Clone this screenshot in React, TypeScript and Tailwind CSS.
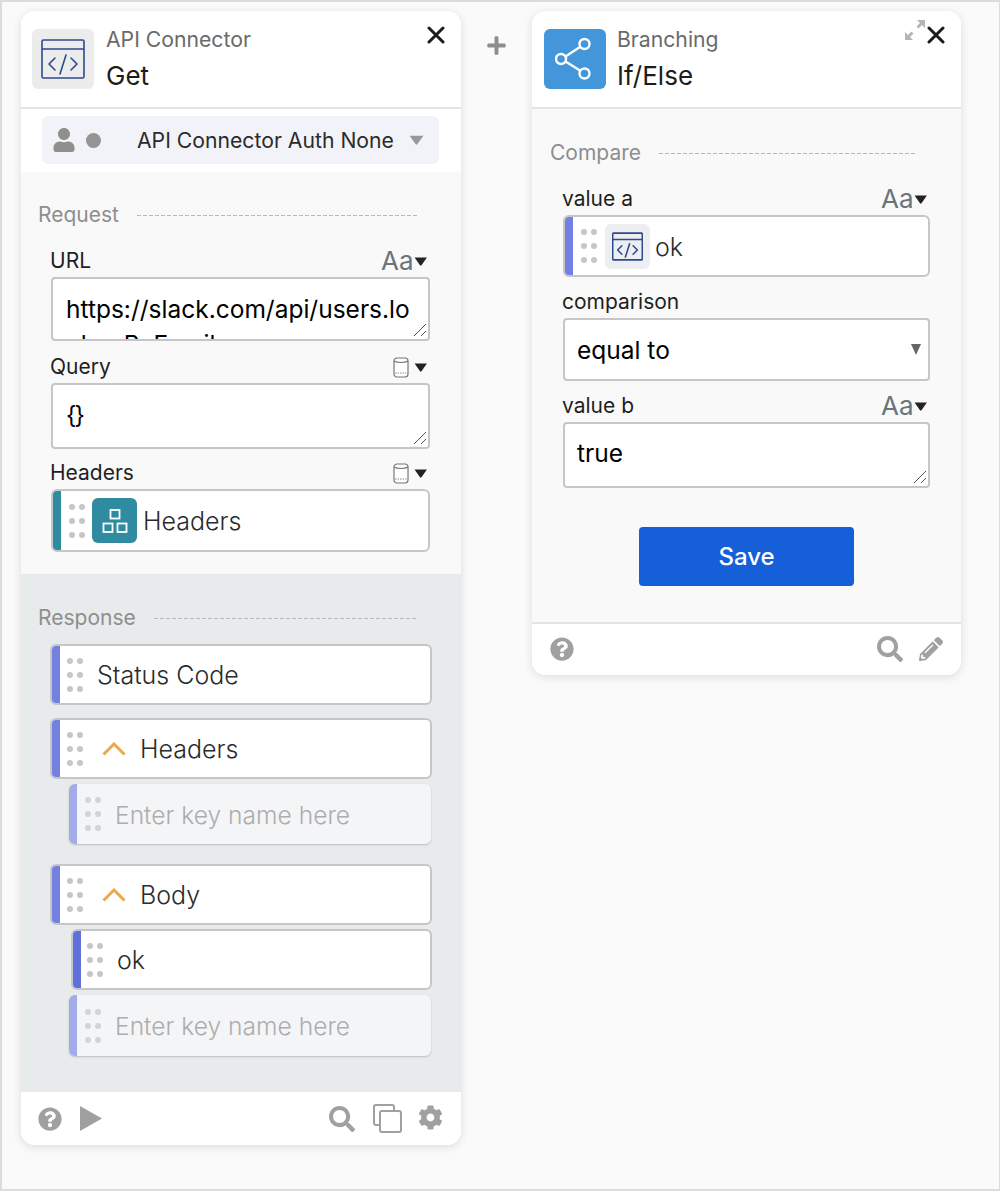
import { ReactNode } from "react";
import { FaUser, FaSearch, FaCog, FaPencilAlt, FaPlus, FaQuestionCircle } from "react-icons/fa";

const CodeIcon = ({ size, stroke = 1.6 }: { size: number; stroke?: number }) => (
  <svg width={size} height={size} viewBox="0 0 44 40" fill="none" stroke="#2c4a8c" strokeWidth={stroke}>
    <rect x="1" y="1" width="42" height="38" rx="1.5" />
    <path d="M1 10h42" />
    <path d="M14 19l-6 6 6 6M30 19l6 6-6 6M25 16l-6 19" strokeLinecap="round" strokeLinejoin="round" />
  </svg>
);

const ShareIcon = () => (
  <svg width="40" height="44" viewBox="0 0 40 44" fill="none" stroke="#fff" strokeWidth="2.4">
    <circle cx="6" cy="22" r="5" />
    <circle cx="29.5" cy="7" r="5" />
    <circle cx="29.5" cy="36.5" r="5" />
    <path d="M10.5 19.5L25 10M10.5 24.5L25 33.5" />
  </svg>
);

const BlocksIcon = () => (
  <svg width="26" height="26" viewBox="0 0 26 26" fill="none" stroke="#fff" strokeWidth="1.8">
    <rect x="8.5" y="2" width="9" height="8.5" />
    <rect x="1.5" y="15.5" width="9" height="8.5" />
    <rect x="15.5" y="15.5" width="9" height="8.5" />
  </svg>
);

const CloseIcon = () => (
  <svg width="18" height="18" viewBox="0 0 18 18" stroke="#1a1a1a" strokeWidth="3" strokeLinecap="round">
    <path d="M2 2l14 14M16 2L2 16" />
  </svg>
);

const Caret = ({ w = 9, color = "#222" }: { w?: number; color?: string }) => (
  <svg width={w * 1.5} height={w} viewBox="0 0 12 8" fill={color}>
    <path d="M0.5 0.5h11L6.8 7.2a1 1 0 0 1-1.6 0z" />
  </svg>
);

const Dots = ({ color = "#c6c6c6" }: { color?: string }) => (
  <svg width="17" height="34" viewBox="0 0 17 34" fill={color} className="shrink-0">
    {[3, 17, 31].map((y) => (
      <g key={y}>
        <circle cx="3" cy={y} r="3" />
        <circle cx="13" cy={y} r="3" />
      </g>
    ))}
  </svg>
);

const DbIcon = () => (
  <svg width="16" height="21" viewBox="0 0 16 21" fill="#fff" stroke="#777" strokeWidth="1.2">
    <rect x="1" y="1" width="14" height="19" rx="3" />
    <path d="M1 4c3 2 11 2 14 0" fill="none" />
    <path d="M2 16h12" strokeDasharray="1.5 1" fill="none" strokeWidth="0.8" />
  </svg>
);

const Grip = () => (
  <svg width="14" height="14" viewBox="0 0 14 14" stroke="#555" strokeWidth="1" className="absolute right-[1px] bottom-[2px]">
    <path d="M1 13L13 1M8 13l5-5" />
  </svg>
);

const AaPicker = () => (
  <span className="mr-[3px] flex items-center text-[26px] leading-none text-[#69757b]">
    Aa
    <span className="mt-[1px]">
      <Caret w={9} />
    </span>
  </span>
);

const DbPicker = () => (
  <span className="mr-[3px] flex items-center gap-[5px]">
    <DbIcon />
    <Caret w={9} />
  </span>
);

const FieldLabel = ({ label, right }: { label: string; right: ReactNode }) => (
  <div className="flex h-[30px] items-center justify-between pb-[2px] text-[21px] text-[#1f1f1f]">
    <span className="ml-[-1px]">{label}</span>
    {right}
  </div>
);

const TextBox = ({ children, height, top = "pt-[13px]" }: { children: ReactNode; height: string; top?: string }) => (
  <div className={`relative overflow-hidden rounded-[4px] border-2 border-[#c6c6c6] bg-white ${height}`}>
    <div className={`break-all px-[13px] text-[24.5px] leading-[35px] text-black ${top}`}>{children}</div>
    <Grip />
  </div>
);

const Row = ({
  accent = "#7480e0",
  faded,
  className,
  children,
}: {
  accent?: string;
  faded?: boolean;
  className: string;
  children: ReactNode;
}) => (
  <div
    className={`flex items-center overflow-hidden rounded-[6px] ${
      faded
        ? "bg-[#f4f5f7] shadow-[0_1px_2px_rgba(0,0,0,0.2)]"
        : "border-2 border-[#c6c6c6] bg-white"
    } ${className}`}
  >
    <div className="h-full w-[8px] shrink-0" style={{ backgroundColor: accent }} />
    {children}
  </div>
);

const RowText = ({ children, className }: { children: string; className: string }) => (
  <span className={`pt-[3px] text-[25px] font-light text-[#2b2b2b] ${className}`}>{children}</span>
);

const Placeholder = () => (
  <span className="ml-[13px] pt-[2px] text-[24.6px] font-light text-[#adadad]">Enter key name here</span>
);

const Chevron = () => (
  <svg width="24" height="14" viewBox="0 0 24 14" fill="none" stroke="#eaa94a" strokeWidth="3" className="shrink-0">
    <path d="M1.5 12.5L12 2l10.5 10.5" />
  </svg>
);

const SectionTitle = ({ title, lineClass, gapClass }: { title: string; lineClass: string; gapClass: string }) => (
  <div className={`flex h-[30px] items-center ${lineClass}`}>
    <span className="text-[21px] text-[#8e8e8e]">{title}</span>
    <div className={`h-px flex-1 bg-[repeating-linear-gradient(90deg,#b8b8b8_0_4px,transparent_4px_6px)] ${gapClass}`} />
  </div>
);

const CardHeader = ({ icon, small, big, iconBg, extra }: { icon: ReactNode; small: string; big: string; iconBg: string; extra?: ReactNode }) => (
  <div className="relative flex h-[98px] shrink-0 border-b-2 border-[#e4e4e4] bg-white pl-[11px] pt-[18px]">
    <div className={`flex h-[60px] w-[62px] items-center justify-center rounded-[6px] ${iconBg}`}>{icon}</div>
    <div className="ml-[12px]">
      <div className="mt-[-4px] text-[21.2px] leading-[28px] text-[#6a6a6a]">{small}</div>
      <div className="mt-[5px] text-[26px] leading-[36px] text-[#1c1c1c]">{big}</div>
    </div>
    {extra}
    <div className="absolute right-[16px] top-[15px]">
      <CloseIcon />
    </div>
  </div>
);

const CopyIcon = () => (
  <svg width="29" height="29" viewBox="0 0 29 29" fill="none" stroke="#a0a0a0" strokeWidth="2">
    <path d="M7 21H3a2 2 0 0 1-2-2V3a2 2 0 0 1 2-2h16a2 2 0 0 1 2 2v4" />
    <rect x="7" y="7" width="21" height="21" rx="2" />
  </svg>
);

const ExpandIcon = () => (
  <svg width="22" height="22" viewBox="0 0 22 22" fill="#b5b5b5">
    <path d="M13 1h8v8l-3-3-3.5 3.5-2-2L16 4z" />
    <path d="M9 21H1v-8l3 3 3.5-3.5 2 2L6 18z" />
  </svg>
);

const PlayIcon = () => (
  <svg width="22" height="25" viewBox="0 0 22 25" fill="#a0a0a0">
    <path d="M0 0l22 12.5L0 25z" />
  </svg>
);

export default function App() {
  return (
    <div
      className="flex h-[1191px] w-[1000px] items-start border-2 border-r border-[#dcdcdc] bg-[#fafafa] pl-[19px] pt-[9px]"
      style={{ fontFamily: "Inter, 'Noto Sans', sans-serif" }}
    >
      {/* API connector */}
      <div className="flex w-[440px] shrink-0 flex-col overflow-hidden rounded-[14px] bg-white shadow-[0_2px_10px_rgba(0,0,0,0.12)]">
        <CardHeader icon={<CodeIcon size={44} />} small="API Connector" big="Get" iconBg="bg-[#ececec]" />

        <div className="h-[63px] bg-white pl-[21px] pr-[22px] pt-[7px]">
          <div className="flex h-[48px] items-center rounded-[6px] bg-[#f2f3f8] pl-[10px] pr-[15px]">
            <FaUser size={24} className="text-[#8f8f8f]" />
            <div className="ml-[10px] h-[15px] w-[15px] rounded-full bg-[#949494]" />
            <span className="ml-[36px] flex-1 pt-[1px] text-[21.2px] text-[#2b2b2b]">API Connector Auth None</span>
            <Caret w={10} color="#989898" />
          </div>
        </div>

        <div className="h-[402px] bg-[#f9f9f9] pl-[17px] pt-[28px]">
          <SectionTitle title="Request" lineClass="w-[379px]" gapClass="ml-[18px]" />
          <div className="ml-[13px] w-[379px]">
            <div className="mt-[17px]">
              <FieldLabel label="URL" right={<AaPicker />} />
              <TextBox height="h-[64px]">https://slack.com/api/users.lookupByEmail</TextBox>
            </div>
            <div className="mt-[12px]">
              <FieldLabel label="Query" right={<DbPicker />} />
              <TextBox height="h-[66px]">
                <span className="tracking-[-0.08em]">{"{}"}</span>
              </TextBox>
            </div>
            <div className="mt-[10px]">
              <FieldLabel label="Headers" right={<DbPicker />} />
              <Row accent="#2f8b9f" className="h-[63px]">
                <div className="ml-[8px]">
                  <Dots />
                </div>
                <div className="ml-[6px] flex h-[45px] w-[45px] items-center justify-center rounded-[6px] bg-[#2f8b9f]">
                  <BlocksIcon />
                </div>
                <RowText className="ml-[6px]">Headers</RowText>
              </Row>
            </div>
          </div>
        </div>

        <div className="h-[518px] bg-[#e8ebec] pl-[17px] pt-[29px]">
          <SectionTitle title="Response" lineClass="w-[379px]" gapClass="ml-[18px]" />
          <div className="mt-[11px] flex w-[394px] flex-col pl-[12px]">
            <Row className="h-[61px]">
              <div className="ml-[7px]">
                <Dots />
              </div>
              <RowText className="ml-[13px]">Status Code</RowText>
            </Row>
            <Row className="mt-[13px] h-[61px]">
              <div className="ml-[7px]">
                <Dots />
              </div>
              <div className="ml-[18px]">
                <Chevron />
              </div>
              <RowText className="ml-[14px]">Headers</RowText>
            </Row>
            <Row accent="#a3ace9" faded className="ml-[19px] mt-[5px] h-[60px] w-[362px]">
              <div className="ml-[8px]">
                <Dots color="#d4d4d4" />
              </div>
              <Placeholder />
            </Row>
            <Row className="mt-[20px] h-[61px]">
              <div className="ml-[7px]">
                <Dots />
              </div>
              <div className="ml-[18px]">
                <Chevron />
              </div>
              <RowText className="ml-[14px]">Body</RowText>
            </Row>
            <Row accent="#5f70dc" className="ml-[21px] mt-[4px] h-[61px] w-[361px]">
              <div className="ml-[6px]">
                <Dots />
              </div>
              <RowText className="ml-[13px]">ok</RowText>
            </Row>
            <Row accent="#a3ace9" faded className="ml-[19px] mt-[5px] h-[61px] w-[362px]">
              <div className="ml-[8px]">
                <Dots color="#d4d4d4" />
              </div>
              <Placeholder />
            </Row>
          </div>
        </div>

        <div className="flex h-[53px] items-center bg-white pl-[17px] pr-[18px]">
          <FaQuestionCircle size={24} className="text-[#a0a0a0]" />
          <div className="ml-[18px]">
            <PlayIcon />
          </div>
          <FaSearch size={26} className="ml-auto text-[#a0a0a0]" />
          <div className="ml-[18px]">
            <CopyIcon />
          </div>
          <FaCog size={25} className="ml-[16px] mb-[2px] text-[#a0a0a0]" />
        </div>
      </div>

      {/* plus */}
      <div className="flex h-[68px] w-[71px] shrink-0 items-center justify-center">
        <FaPlus size={21} className="text-[#8e8e8e]" />
      </div>

      {/* If/Else */}
      <div className="flex w-[429px] shrink-0 flex-col overflow-hidden rounded-[14px] bg-white shadow-[0_2px_10px_rgba(0,0,0,0.12)]">
        <CardHeader
          icon={<ShareIcon />}
          small="Branching"
          big="If/Else"
          iconBg="ml-[1px] mr-[-1px] bg-[#4296d9]"
          extra={
            <div className="absolute right-[35px] top-[8px]">
              <ExpandIcon />
            </div>
          }
        />

        <div className="h-[515px] border-b-2 border-[#e4e4e4] bg-[#f9f9f9] pl-[18px] pt-[29px]">
          <SectionTitle title="Compare" lineClass="w-[366px]" gapClass="ml-[18px]" />
          <div className="ml-[13px] w-[367px]">
            <div className="mt-[17px]">
              <FieldLabel label="value a" right={<AaPicker />} />
              <Row className="h-[62px]">
                <div className="ml-[8px]">
                  <Dots />
                </div>
                <div className="ml-[7px] flex h-[45px] w-[45px] items-center justify-center rounded-[6px] bg-[#eceef1]">
                  <CodeIcon size={31} stroke={2.2} />
                </div>
                <RowText className="ml-[5px]">ok</RowText>
              </Row>
            </div>
            <div className="mt-[11px]">
              <FieldLabel label="comparison" right={null} />
              <div className="flex h-[63px] items-center justify-between rounded-[4px] border-2 border-[#c6c6c6] bg-white pl-[12px] pr-[7px]">
                <span className="pt-[2px] text-[24.5px] text-black">equal to</span>
                <svg width="10" height="11" viewBox="0 0 10 11" fill="#666">
                  <path d="M0 0h10L5 11z" />
                </svg>
              </div>
            </div>
            <div className="mt-[11px]">
              <FieldLabel label="value b" right={<AaPicker />} />
              <TextBox height="h-[66px]" top="ml-[-1px] pt-[12px]">
                true
              </TextBox>
            </div>
          </div>
          <button className="ml-[89px] mt-[39px] h-[59px] w-[215px] rounded-[4px] bg-[#1560d8] text-[24px] font-medium text-white">
            Save
          </button>
        </div>

        <div className="flex h-[51px] items-center bg-white pb-[2px] pl-[18px] pr-[18px]">
          <FaQuestionCircle size={24} className="text-[#a0a0a0]" />
          <FaSearch size={26} className="ml-auto text-[#a0a0a0]" />
          <FaPencilAlt size={24} className="ml-[16px] text-[#a0a0a0]" />
        </div>
      </div>
    </div>
  );
}
